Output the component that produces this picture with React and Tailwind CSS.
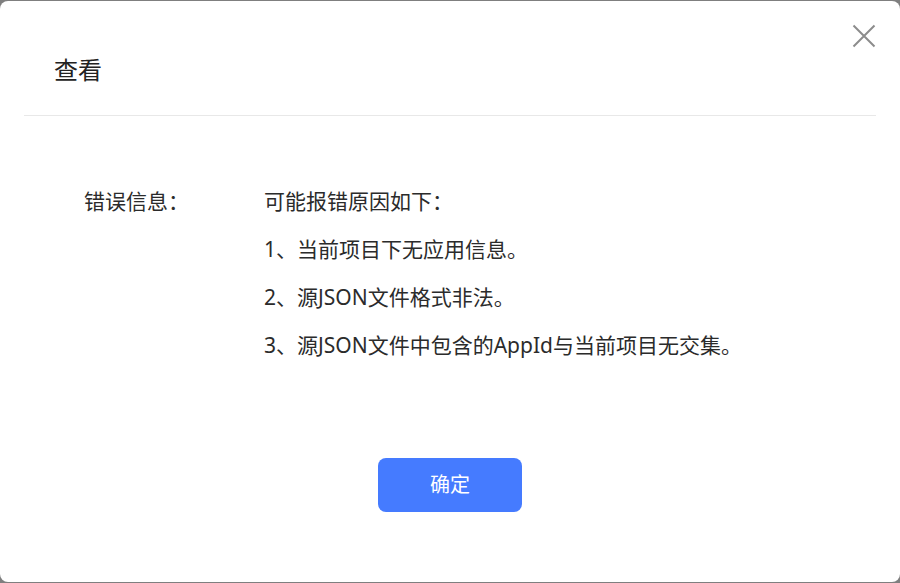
import React from 'react';

const REASONS = [
  '可能报错原因如下：',
  '1、当前项目下无应用信息。',
  '2、源JSON文件格式非法。',
  '3、源JSON文件中包含的AppId与当前项目无交集。',
];

export default function App() {
  return (
    <div
      className="h-[583px] w-[900px] bg-[#7f7f7f] pt-px pb-px"
      style={{ fontFamily: '"Noto Sans", "Noto Sans CJK SC", sans-serif' }}
    >
      <div className="relative flex h-[581px] flex-col rounded-[8px] bg-white">
        <button className="absolute left-[852px] top-[23px] h-[24px] w-[24px] text-[#8c8c8c]">
          <svg viewBox="0 0 24 24" className="h-[24px] w-[24px]" fill="none" stroke="currentColor" strokeWidth="2">
            <path d="M1.5 1.5 L22.5 22.5 M22.5 1.5 L1.5 22.5" />
          </svg>
        </button>

        <div className="h-[114px] pl-[54px] pt-[53px]">
          <h2 className="text-[24px] leading-[32px] text-[#222222]">查看</h2>
        </div>
        <div className="mx-[24px] h-px bg-[#e8e8e8]" />

        <div className="flex pl-[84px] pt-[61px] text-[21px] leading-[48px] text-[#2b2b2b]">
          <div className="w-[180px] shrink-0">错误信息：</div>
          <div className="flex flex-col">
            {REASONS.map((r) => (
              <div key={r}>{r}</div>
            ))}
          </div>
        </div>

        <div className="flex justify-center pt-[89px]">
          <button className="h-[54px] w-[144px] rounded-[8px] bg-[#457bff] text-[20px] text-white">
            确定
          </button>
        </div>
      </div>
    </div>
  );
}
